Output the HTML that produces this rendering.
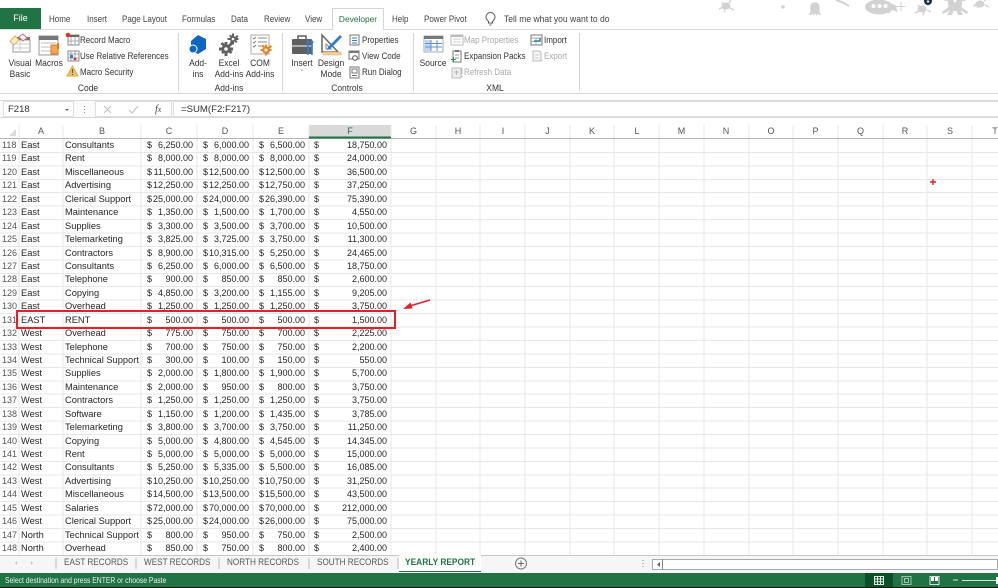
<!DOCTYPE html>
<html lang="en"><head><meta charset="utf-8"><title>Excel</title>
<style>
html,body{margin:0;padding:0;background:#fff}
#p{position:relative;width:998px;height:588px;overflow:hidden;background:#fff;font-family:"Liberation Sans",sans-serif;color:#333;filter:blur(.3px)}
.t{position:absolute;white-space:nowrap;line-height:12px;font-size:9px;transform:scaleX(.89);transform-origin:left center}
.c{transform:translateX(-50%) scaleX(.94);transform-origin:center center;text-align:center}
.g{color:#aaa}
.tab{font-size:9px;color:#444;top:13px}
.l{position:absolute;background:#d6d6d6}
svg{position:absolute;overflow:visible}
.r{position:absolute;left:0;height:13.43px;display:flex;line-height:13.43px;font-size:9.2px;color:#262626;white-space:nowrap}
.r i{font-style:normal;width:19px;box-sizing:border-box;padding-left:2px;color:#555;font-size:9px}
.r b{font-weight:normal;box-sizing:border-box;padding-left:2px;width:44px;font-size:9.3px}
.r b+b{width:78px}
.r span{display:flex;justify-content:space-between;box-sizing:border-box;width:56px;padding:0 4px 0 6px;font-size:9px}
.r span:last-child{width:82px;padding-left:5px}
.r em{font-style:normal}
.ch{position:absolute;top:125px;line-height:13px;font-size:9px;color:#555;transform:translateX(-50%)}
.st{position:absolute;top:556px;line-height:13px;font-size:9.6px;color:#555;white-space:nowrap;transform:scaleX(.85);transform-origin:left center}
</style></head><body>
<div id="p">

<!-- decorative theme art -->
<svg style="left:0;top:0" width="998" height="24" fill="#d2d2d2">
<g stroke="#d2d2d2" fill="none" stroke-width="1.500"><path d="M719 9l5-2M729 3l2-3M730 8l4 2M722 2l2 3M725 9l-1 3"/><path d="M915 13l6-3M927 6l3-3M927 10l4 2M918 5l3 3M924 12l-1 3"/><path d="M973 6l5-2M984 1l2-1M985 5l4 2M978 7l-1 1"/><path d="M836 0l7 2.500 6 3.500" stroke-width="2"/></g>
<ellipse cx="726" cy="6" rx="4.500" ry="3.500"/>
<circle cx="783" cy="7" r="1.800"/>
<circle cx="815" cy="7" r="4.800"/><path d="M810.500 9h9v3l1.500 3h-2.500l-1-2-1 3-1.500-3-1.500 3-1-3-1 2h-2.500l1.500-3z"/>
<ellipse cx="879" cy="7" rx="14" ry="7.500"/><path d="M890 3l7 3 1 0-2 2 2 4-6-2-4 4z"/>
<circle cx="873.500" cy="6" r="2" fill="#fff"/><circle cx="879.500" cy="6" r="2" fill="#fff"/><circle cx="885.500" cy="6" r="2" fill="#fff"/>
<path d="M901 2v9M897 6.500h8" stroke="#d2d2d2" fill="none"/>
<ellipse cx="922" cy="9" rx="4.500" ry="3.500"/>
<circle cx="928" cy="1" r="4" fill="#1d2a4c"/><circle cx="928" cy="1.500" r="1.300" fill="#cfd6e6"/>
<circle cx="955" cy="4" r="7"/><path d="M950 6l-8 6 1 2 9-5zM960 6l8 6-1 2-9-5zM951 8l-4 7h5l2-5zM959 8l4 7h-5l-2-5z"/><path d="M950 2l-7-2 6 0zM960 2l7-2-6 0z"/><circle cx="955" cy="1" r="1.400" fill="#fff"/>
<ellipse cx="980" cy="4" rx="4.500" ry="3.500"/>
</svg>

<!-- tabs -->
<div style="position:absolute;left:0;top:8px;width:41px;height:21px;background:#217346;color:#fff;font-size:9px;line-height:21px;text-align:center">File</div>
<div class="l" style="left:0;top:29px;width:998px;height:1px;background:#d8d8d8"></div>
<div style="position:absolute;left:332px;top:8px;width:52px;height:22px;box-sizing:border-box;border:1px solid #d4d4d4;border-bottom:0;background:#fff;color:#217346;font-size:8.400px;line-height:21px;text-align:center">Developer</div>
<div class="t tab" style="left:49px">Home</div>
<div class="t tab" style="left:87px">Insert</div>
<div class="t tab" style="left:122px">Page Layout</div>
<div class="t tab" style="left:182px">Formulas</div>
<div class="t tab" style="left:231px">Data</div>
<div class="t tab" style="left:264px">Review</div>
<div class="t tab" style="left:305px">View</div>
<div class="t tab" style="left:392px">Help</div>
<div class="t tab" style="left:424px">Power Pivot</div>
<svg style="left:485px;top:12px" width="12" height="14" fill="none" stroke="#555"><path d="M3.500 9.500C1.500 7.500 1 6.500 1 5a4.500 4.500 0 0 1 9 0c0 1.500-.5 2.500-2.500 4.500V11h-4zM4.500 13h2"/></svg>
<div class="t tab" style="left:504px;transform:scaleX(.95)">Tell me what you want to do</div>

<!-- ribbon text -->
<div class="t c" style="left:20px;top:57px">Visual</div>
<div class="t c" style="left:20px;top:68px">Basic</div>
<div class="t c" style="left:49px;top:57px">Macros</div>
<div class="t" style="left:80px;top:33.500px">Record Macro</div>
<div class="t" style="left:80px;top:50px">Use Relative References</div>
<div class="t" style="left:80px;top:66px">Macro Security</div>
<div class="t c" style="left:88px;top:82px">Code</div>
<div class="t c" style="left:198px;top:57px">Add-</div>
<div class="t c" style="left:198px;top:68px">ins</div>
<div class="t c" style="left:229px;top:57px">Excel</div>
<div class="t c" style="left:229px;top:68px">Add-ins</div>
<div class="t c" style="left:260px;top:57px">COM</div>
<div class="t c" style="left:260px;top:68px">Add-ins</div>
<div class="t c" style="left:229px;top:82px">Add-ins</div>
<div class="t c" style="left:302px;top:57px">Insert</div>
<div class="t c" style="left:302px;top:68px;font-size:7px">&#711;</div>
<div class="t c" style="left:331px;top:57px">Design</div>
<div class="t c" style="left:331px;top:68px">Mode</div>
<div class="t" style="left:362px;top:33.500px">Properties</div>
<div class="t" style="left:362px;top:50px">View Code</div>
<div class="t" style="left:362px;top:66px">Run Dialog</div>
<div class="t c" style="left:347px;top:82px">Controls</div>
<div class="t c" style="left:433px;top:57px">Source</div>
<div class="t g" style="left:464px;top:33.500px">Map Properties</div>
<div class="t" style="left:464px;top:50px">Expansion Packs</div>
<div class="t g" style="left:464px;top:66px">Refresh Data</div>
<div class="t" style="left:544px;top:33.500px">Import</div>
<div class="t g" style="left:544px;top:50px">Export</div>
<div class="t c" style="left:495px;top:82px">XML</div>
<div class="l" style="left:178px;top:33px;width:1px;height:58px"></div>
<div class="l" style="left:282px;top:33px;width:1px;height:58px"></div>
<div class="l" style="left:413px;top:33px;width:1px;height:58px"></div>
<div class="l" style="left:579px;top:33px;width:1px;height:58px"></div>
<div class="l" style="left:0;top:93px;width:998px;height:1px"></div>

<!-- ribbon icons -->
<svg style="left:0;top:0" width="600" height="90">
<!-- Visual Basic -->
<rect x="13" y="40" width="17" height="12" fill="#fff" stroke="#9a9a9a"/><rect x="17" y="37" width="13" height="3" fill="#777"/>
<path d="M10 41l5-5 4 4-5 5z" fill="#fbeec0" stroke="#d9b35f"/><path d="M19 37l4-3 4 4-4 3z" fill="#fff" stroke="#e0607a"/>
<path d="M14 44h16M14 48h16M20 41v11" stroke="#ccc"/>
<!-- Macros -->
<rect x="39" y="36" width="19" height="19" fill="#fff" stroke="#999"/><rect x="39" y="36" width="19" height="4" fill="#777"/>
<path d="M41 43h15M41 47h15M41 51h11" stroke="#bbb"/>
<path d="M51 45h7v9h-7z" fill="#f2a65a" stroke="#e07b1a"/><path d="M57 43h2v6h-2z" fill="#e07b1a"/>
<!-- Record -->
<rect x="68" y="35" width="11" height="10" fill="#fff" stroke="#888"/><rect x="68" y="35" width="11" height="2" fill="#666"/><path d="M71 37v8M75 37v8M68 41h11" stroke="#aaa"/><circle cx="68" cy="35" r="2.300" fill="#d8362a"/>
<!-- Relative -->
<rect x="68" y="51" width="11" height="10" fill="#fff" stroke="#888"/><path d="M71 51v10M75 51v10M68 54h11M68 58h11" stroke="#9aa"/><rect x="70" y="55" width="3" height="3" fill="#3a79c4"/><circle cx="75" cy="59" r="1.400" fill="#d8362a"/>
<!-- Security -->
<path d="M72.500 66l5.500 10h-11z" fill="#f0bf62" stroke="#dba94a"/><path d="M72.500 69v4M72.500 74v1" stroke="#555"/>
<!-- Add-ins -->
<path d="M198 35l8 4v10l-8 5-7-3 0-10z" fill="#0f66c0"/><circle cx="193" cy="49" r="4" fill="#0f66c0" stroke="#fff"/>
<!-- Excel Add-ins gears -->
<g fill="#606060"><circle cx="226" cy="49" r="4.500"/><path d="M224.500 42h3v14h-3zM219 47.500h14v3h-14zM220.500 44l2-2 10 10-2 2zM231 42l2 2-10 10-2-2z"/><circle cx="233" cy="39" r="3"/><path d="M232 33.500h2v11h-2zM227.500 38h11v2h-11zM229 36l1.500-1.500 7 7-1.500 1.500zM237 35l1.500 1.500-7 7-1.500-1.500z"/></g>
<circle cx="226" cy="49" r="1.800" fill="#fff"/><circle cx="233" cy="39" r="1.300" fill="#fff"/>
<!-- COM -->
<rect x="251" y="35" width="18" height="19" fill="#fff" stroke="#aaa"/><path d="M258 38h9M258 42h9M258 46h4M253 38l1 1 2-2M253 42l1 1 2-2M253 46l1 1 2-2" stroke="#888" fill="none"/>
<g fill="#e8842a"><circle cx="266" cy="50" r="3.800"/><path d="M265 44.500h2v11h-2zM260.500 49h11v2h-11zM261.500 46l1.500-1.500 7 7-1.500 1.500zM270.500 45l1.500 1.500-7 7-1.500-1.500z"/></g><circle cx="266" cy="50" r="1.500" fill="#fff"/>
<!-- Insert -->
<rect x="292" y="39" width="20" height="15" rx="1" fill="#5f5f5f"/><path d="M298 39v-3h8v3" fill="none" stroke="#5f5f5f" stroke-width="1.500"/><path d="M292 46h20" stroke="#fff"/>
<path d="M308 42v13M312 42v13" stroke="#2f7fd0" stroke-width="1.600"/><circle cx="308" cy="42" r="1.500" fill="#2f7fd0"/><circle cx="312" cy="42" r="1.500" fill="#2f7fd0"/>
<!-- Design -->
<path d="M322 35l0 17h16z" fill="#fff" stroke="#666" stroke-width="1.500"/><path d="M326 44l0 5h5z" fill="none" stroke="#888"/>
<path d="M328 47l12-12 2 2-12 12-3 1z" fill="#2f7fd0"/><path d="M323 52h18v3h-18z" fill="#f5cf9c" stroke="#d9a560" stroke-width=".6"/>
<!-- Properties etc -->
<rect x="350" y="35" width="9" height="10" fill="#fff" stroke="#777"/><path d="M352 38h5M352 40.500h5M352 43h5" stroke="#2f7fd0"/>
<rect x="349" y="51" width="10" height="8" fill="#fff" stroke="#777"/><rect x="349" y="51" width="10" height="2" fill="#777"/><circle cx="355" cy="58" r="2.300" fill="#fff" stroke="#555"/>
<rect x="350" y="67" width="9" height="11" fill="#fff" stroke="#777"/><rect x="352" y="69" width="5" height="4" fill="none" stroke="#777"/><path d="M352 75.500h5" stroke="#777"/>
<!-- Source -->
<rect x="424" y="36" width="19" height="16" fill="#fff" stroke="#aaa"/><rect x="424" y="36" width="19" height="3" fill="#777"/>
<path d="M425 40h6v11h-6z" fill="#bcd6f0"/><path d="M425 43.500h17M425 47h17M431 40v11M437 40v11" stroke="#5c94d2"/>
<!-- Map props -->
<rect x="451" y="35" width="12" height="10" fill="#fff" stroke="#bbb"/><rect x="451" y="35" width="12" height="2" fill="#bbb"/><path d="M453 39h8M453 42h8" stroke="#ccc"/>
<!-- Expansion -->
<rect x="453" y="51" width="8" height="11" fill="#fff" stroke="#777"/><path d="M455 50h4v2h-4z" fill="#777"/><path d="M455 55h4M455 58h4" stroke="#999"/><path d="M453.500 57v5M451 59.500h5" stroke="#2a9152"/>
<!-- Refresh -->
<rect x="452" y="68" width="9" height="10" fill="#eee" stroke="#bbb"/><path d="M454 72h5M456.500 70v5" stroke="#bbb"/><path d="M462 68v6M462 76v1" stroke="#bbb"/>
<!-- Import -->
<rect x="531" y="35" width="11" height="10" fill="#fff" stroke="#777"/><path d="M531 38h11M536 38v7M531 41.500h11" stroke="#aaa"/><path d="M534 41h6" stroke="#2f7fd0" stroke-width="1.500"/><path d="M540 38v3" stroke="#2a9152" stroke-width="1.500"/>
<!-- Export -->
<path d="M533 51h6l2 2v8h-8z" fill="#f6f6f6" stroke="#bbb"/><path d="M535 55h4M535 58h4M540 60h3" stroke="#ccc"/>
</svg>

<!-- formula bar -->
<div style="position:absolute;left:0;top:94px;width:998px;height:31px;background:#fff"></div>
<div style="position:absolute;left:0;top:100px;width:998px;height:18px;background:#fbfbfb;border-top:1px solid #d8d8d8;border-bottom:1px solid #d8d8d8;box-sizing:border-box"></div>
<div style="position:absolute;left:3px;top:101px;width:71px;height:16px;box-sizing:border-box;background:#fff;border:1px solid #dedede;font-size:9.500px;line-height:16px;padding-left:4px;color:#333">F218</div>
<svg style="left:0;top:100px" width="175" height="18"><path d="M65 9l2 2 2-2z" fill="#666"/><path d="M84.500 6v1M84.500 9v1M84.500 12v1" stroke="#888"/></svg>
<div style="position:absolute;left:95px;top:101px;width:77px;height:16px;box-sizing:border-box;background:#fff;border:1px solid #dedede"></div>
<svg style="left:0;top:100px" width="175" height="18"><path d="M104 6l7 7M111 6l-7 7" stroke="#c4c4c4" stroke-width="1.200"/><path d="M129 10l3 3 6-7" stroke="#c4c4c4" stroke-width="1.200" fill="none"/></svg>
<div style="position:absolute;left:155px;top:103px;font:italic 10px/13px 'Liberation Serif',serif;color:#444">f<span style="font-size:8px">x</span></div>
<div style="position:absolute;left:173px;top:101px;width:826px;height:16px;box-sizing:border-box;background:#fff;border:1px solid #dedede;font-size:9.600px;line-height:16px;padding-left:7px;color:#333">=SUM(F2:F217)</div>

<!-- column headers -->
<div style="position:absolute;left:0;top:125px;width:998px;height:13px;background:#fff"></div>
<div style="position:absolute;left:309px;top:125px;width:82px;height:13px;background:#d9d9d9"></div>
<svg style="left:0;top:125px" width="20" height="14"><path d="M9 11l7-7v7z" fill="#dcdcdc"/></svg>
<div class="ch" style="left:41px">A</div><div class="ch" style="left:102px">B</div><div class="ch" style="left:169px">C</div><div class="ch" style="left:225px">D</div><div class="ch" style="left:281px">E</div><div class="ch" style="left:350px;color:#217346">F</div>
<div class="ch" style="left:413.500px">G</div><div class="ch" style="left:458px">H</div><div class="ch" style="left:503px">I</div><div class="ch" style="left:547.500px">J</div><div class="ch" style="left:592px">K</div><div class="ch" style="left:637px">L</div><div class="ch" style="left:681.500px">M</div><div class="ch" style="left:726px">N</div><div class="ch" style="left:771px">O</div><div class="ch" style="left:815.500px">P</div><div class="ch" style="left:860.500px">Q</div><div class="ch" style="left:905px">R</div><div class="ch" style="left:950px">S</div><div class="ch" style="left:995px">T</div>

<!-- grid -->
<svg style="left:0;top:125px" width="998" height="431" shape-rendering="crispEdges" stroke="#e7e7e7" fill="none">
<path d="M19 0V431M63 0V431M141 0V431M197 0V431M253 0V431M309 0V431M391 0V431M436 0V431M480 0V431M525 0V431M570 0V431M614 0V431M659 0V431M704 0V431M749 0V431M793 0V431M838 0V431M883 0V431M927 0V431M972 0V431"/>
<path d="M0 27.400H998M0 40.800H998M0 54.300H998M0 67.700H998M0 81.100H998M0 94.600H998M0 108H998M0 121.400H998M0 134.900H998M0 148.300H998M0 161.700H998M0 175.200H998M0 188.600H998M0 202H998M0 215.500H998M0 228.900H998M0 242.300H998M0 255.800H998M0 269.200H998M0 282.600H998M0 296.100H998M0 309.500H998M0 322.900H998M0 336.400H998M0 349.800H998M0 363.200H998M0 376.700H998M0 390.100H998M0 403.500H998M0 417H998M0 430.400H998"/>
<path d="M0 13.500H998" stroke="#b5b5b5"/><path d="M309 12.500H391" stroke="#217346" stroke-width="2"/>
</svg>

<!-- rows -->
<div class="r" style="top:139px"><i>118</i><b>East</b><b>Consultants</b><span>$<em>6,250.00</em></span><span>$<em>6,000.00</em></span><span>$<em>6,500.00</em></span><span>$<em>18,750.00</em></span></div>
<div class="r" style="top:152.400px"><i>119</i><b>East</b><b>Rent</b><span>$<em>8,000.00</em></span><span>$<em>8,000.00</em></span><span>$<em>8,000.00</em></span><span>$<em>24,000.00</em></span></div>
<div class="r" style="top:165.900px"><i>120</i><b>East</b><b>Miscellaneous</b><span>$<em>11,500.00</em></span><span>$<em>12,500.00</em></span><span>$<em>12,500.00</em></span><span>$<em>36,500.00</em></span></div>
<div class="r" style="top:179.300px"><i>121</i><b>East</b><b>Advertising</b><span>$<em>12,250.00</em></span><span>$<em>12,250.00</em></span><span>$<em>12,750.00</em></span><span>$<em>37,250.00</em></span></div>
<div class="r" style="top:192.700px"><i>122</i><b>East</b><b>Clerical Support</b><span>$<em>25,000.00</em></span><span>$<em>24,000.00</em></span><span>$<em>26,390.00</em></span><span>$<em>75,390.00</em></span></div>
<div class="r" style="top:206.200px"><i>123</i><b>East</b><b>Maintenance</b><span>$<em>1,350.00</em></span><span>$<em>1,500.00</em></span><span>$<em>1,700.00</em></span><span>$<em>4,550.00</em></span></div>
<div class="r" style="top:219.600px"><i>124</i><b>East</b><b>Supplies</b><span>$<em>3,300.00</em></span><span>$<em>3,500.00</em></span><span>$<em>3,700.00</em></span><span>$<em>10,500.00</em></span></div>
<div class="r" style="top:233px"><i>125</i><b>East</b><b>Telemarketing</b><span>$<em>3,825.00</em></span><span>$<em>3,725.00</em></span><span>$<em>3,750.00</em></span><span>$<em>11,300.00</em></span></div>
<div class="r" style="top:246.500px"><i>126</i><b>East</b><b>Contractors</b><span>$<em>8,900.00</em></span><span>$<em>10,315.00</em></span><span>$<em>5,250.00</em></span><span>$<em>24,465.00</em></span></div>
<div class="r" style="top:259.900px"><i>127</i><b>East</b><b>Consultants</b><span>$<em>6,250.00</em></span><span>$<em>6,000.00</em></span><span>$<em>6,500.00</em></span><span>$<em>18,750.00</em></span></div>
<div class="r" style="top:273.300px"><i>128</i><b>East</b><b>Telephone</b><span>$<em>900.00</em></span><span>$<em>850.00</em></span><span>$<em>850.00</em></span><span>$<em>2,600.00</em></span></div>
<div class="r" style="top:286.800px"><i>129</i><b>East</b><b>Copying</b><span>$<em>4,850.00</em></span><span>$<em>3,200.00</em></span><span>$<em>1,155.00</em></span><span>$<em>9,205.00</em></span></div>
<div class="r" style="top:300.200px"><i>130</i><b>East</b><b>Overhead</b><span>$<em>1,250.00</em></span><span>$<em>1,250.00</em></span><span>$<em>1,250.00</em></span><span>$<em>3,750.00</em></span></div>
<div class="r" style="top:313.600px"><i>131</i><b>EAST</b><b>RENT</b><span>$<em>500.00</em></span><span>$<em>500.00</em></span><span>$<em>500.00</em></span><span>$<em>1,500.00</em></span></div>
<div class="r" style="top:327.100px"><i>132</i><b>West</b><b>Overhead</b><span>$<em>775.00</em></span><span>$<em>750.00</em></span><span>$<em>700.00</em></span><span>$<em>2,225.00</em></span></div>
<div class="r" style="top:340.500px"><i>133</i><b>West</b><b>Telephone</b><span>$<em>700.00</em></span><span>$<em>750.00</em></span><span>$<em>750.00</em></span><span>$<em>2,200.00</em></span></div>
<div class="r" style="top:353.900px"><i>134</i><b>West</b><b>Technical Support</b><span>$<em>300.00</em></span><span>$<em>100.00</em></span><span>$<em>150.00</em></span><span>$<em>550.00</em></span></div>
<div class="r" style="top:367.400px"><i>135</i><b>West</b><b>Supplies</b><span>$<em>2,000.00</em></span><span>$<em>1,800.00</em></span><span>$<em>1,900.00</em></span><span>$<em>5,700.00</em></span></div>
<div class="r" style="top:380.800px"><i>136</i><b>West</b><b>Maintenance</b><span>$<em>2,000.00</em></span><span>$<em>950.00</em></span><span>$<em>800.00</em></span><span>$<em>3,750.00</em></span></div>
<div class="r" style="top:394.200px"><i>137</i><b>West</b><b>Contractors</b><span>$<em>1,250.00</em></span><span>$<em>1,250.00</em></span><span>$<em>1,250.00</em></span><span>$<em>3,750.00</em></span></div>
<div class="r" style="top:407.700px"><i>138</i><b>West</b><b>Software</b><span>$<em>1,150.00</em></span><span>$<em>1,200.00</em></span><span>$<em>1,435.00</em></span><span>$<em>3,785.00</em></span></div>
<div class="r" style="top:421.100px"><i>139</i><b>West</b><b>Telemarketing</b><span>$<em>3,800.00</em></span><span>$<em>3,700.00</em></span><span>$<em>3,750.00</em></span><span>$<em>11,250.00</em></span></div>
<div class="r" style="top:434.500px"><i>140</i><b>West</b><b>Copying</b><span>$<em>5,000.00</em></span><span>$<em>4,800.00</em></span><span>$<em>4,545.00</em></span><span>$<em>14,345.00</em></span></div>
<div class="r" style="top:448px"><i>141</i><b>West</b><b>Rent</b><span>$<em>5,000.00</em></span><span>$<em>5,000.00</em></span><span>$<em>5,000.00</em></span><span>$<em>15,000.00</em></span></div>
<div class="r" style="top:461.400px"><i>142</i><b>West</b><b>Consultants</b><span>$<em>5,250.00</em></span><span>$<em>5,335.00</em></span><span>$<em>5,500.00</em></span><span>$<em>16,085.00</em></span></div>
<div class="r" style="top:474.800px"><i>143</i><b>West</b><b>Advertising</b><span>$<em>10,250.00</em></span><span>$<em>10,250.00</em></span><span>$<em>10,750.00</em></span><span>$<em>31,250.00</em></span></div>
<div class="r" style="top:488.300px"><i>144</i><b>West</b><b>Miscellaneous</b><span>$<em>14,500.00</em></span><span>$<em>13,500.00</em></span><span>$<em>15,500.00</em></span><span>$<em>43,500.00</em></span></div>
<div class="r" style="top:501.700px"><i>145</i><b>West</b><b>Salaries</b><span>$<em>72,000.00</em></span><span>$<em>70,000.00</em></span><span>$<em>70,000.00</em></span><span>$<em>212,000.00</em></span></div>
<div class="r" style="top:515.100px"><i>146</i><b>West</b><b>Clerical Support</b><span>$<em>25,000.00</em></span><span>$<em>24,000.00</em></span><span>$<em>26,000.00</em></span><span>$<em>75,000.00</em></span></div>
<div class="r" style="top:528.600px"><i>147</i><b>North</b><b>Technical Support</b><span>$<em>800.00</em></span><span>$<em>950.00</em></span><span>$<em>750.00</em></span><span>$<em>2,500.00</em></span></div>
<div class="r" style="top:542px"><i>148</i><b>North</b><b>Overhead</b><span>$<em>850.00</em></span><span>$<em>750.00</em></span><span>$<em>800.00</em></span><span>$<em>2,400.00</em></span></div>

<!-- annotations -->
<div style="position:absolute;left:16px;top:309.500px;width:380px;height:19.500px;box-sizing:border-box;border:2px solid #ee1c25"></div>
<svg style="left:400px;top:295px" width="34" height="18"><path d="M30 5L8 11.500" stroke="#e3222a" stroke-width="1.600"/><path d="M3 14l7.500-6.500 2 6z" fill="#e3222a"/></svg>
<svg style="left:929px;top:178px" width="8" height="8"><path d="M4 1v6M1 4h6" stroke="#e0202a" stroke-width="1.400"/></svg>

<!-- sheet tabs -->
<div style="position:absolute;left:0;top:555px;width:998px;height:18px;background:#f6f6f6;border-top:1px solid #c6c6c6;box-sizing:border-box"></div>
<svg style="left:0;top:556px" width="660" height="17"><path d="M17 5l-2 2 2 2z" fill="#c4c4c4"/><path d="M31 5l2 2-2 2z" fill="#c4c4c4"/>
<path d="M56 2v11M136 2v11M219 2v11M309 2v11M398 2v11" stroke="#bbb"/>
<circle cx="521" cy="7.500" r="5.500" fill="#f6f6f6" stroke="#777"/><path d="M521 4.500v6M518 7.500h6" stroke="#666"/>
<path d="M643 4v1M643 7v1M643 10v1" stroke="#888"/></svg>
<div style="position:absolute;left:399px;top:555px;width:82px;height:16px;background:#fff;border-bottom:1.500px solid #217346"></div>
<div class="st" style="left:64px">EAST RECORDS</div>
<div class="st" style="left:144px">WEST RECORDS</div>
<div class="st" style="left:227px">NORTH RECORDS</div>
<div class="st" style="left:317px">SOUTH RECORDS</div>
<div class="st" style="left:405px;color:#217346;font-weight:bold;font-size:9.200px;transform:scaleX(.91)">YEARLY REPORT</div>
<div style="position:absolute;left:652px;top:559px;width:346px;height:11px;box-sizing:border-box;background:#fff;border:1px solid #aaa"></div>
<svg style="left:652px;top:559px" width="12" height="11"><path d="M8 3L5 5.500 8 8z" fill="#666"/><path d="M10.500 0v11" stroke="#888"/></svg>

<!-- status bar -->
<div style="position:absolute;left:0;top:573px;width:998px;height:14px;background:#217346"></div>
<div style="position:absolute;left:0;top:587px;width:998px;height:1px;background:#111"></div>
<div style="position:absolute;left:5px;top:574px;line-height:14px;font-size:8.200px;color:#e8f2ec;white-space:nowrap;transform:scaleX(.83);transform-origin:left center">Select destination and press ENTER or choose Paste</div>
<div style="position:absolute;left:865px;top:573px;width:28px;height:14px;background:#0a4f27"></div>
<svg style="left:860px;top:573px" width="138" height="14" fill="none" stroke="#dfeee5">
<path d="M14.500 3.500h9v8h-9zM14.500 6h9M14.500 8.800h9M17.500 3.500v8M20.500 3.500v8"/>
<path d="M42 3.500h9v8h-9zM44.500 5.500h4v4h-4z" stroke="#9cc7ad"/>
<path d="M70 3.500h9v8h-9z" stroke="#cfe4d7"/><path d="M71 4h3v4h-3zM75 4h3v4h-3z" fill="#fff" stroke="none"/>
<path d="M93 7h5M102 7.500h34" stroke="#cfe4d7"/><path d="M136 4h2v7h-2z" fill="#fff" stroke="none"/>
</svg>
</div>
</body></html>
